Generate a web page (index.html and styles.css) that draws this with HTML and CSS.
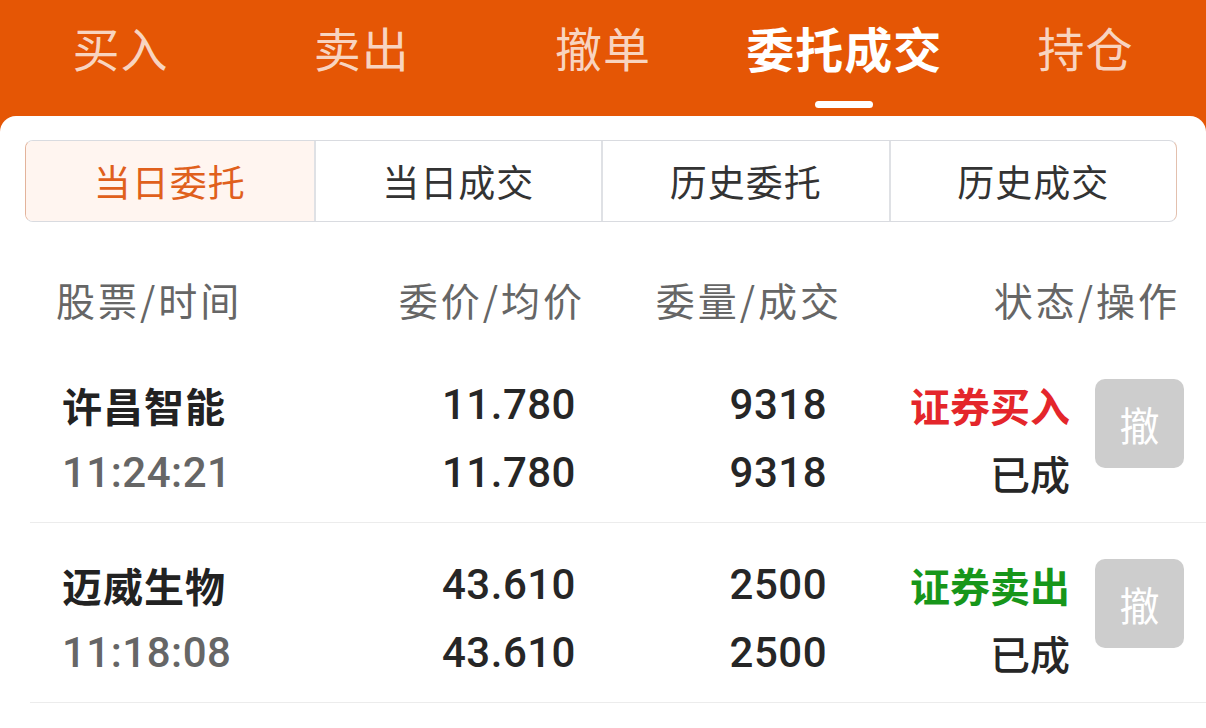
FILE: index.html
```html
<!DOCTYPE html>
<html lang="zh-CN">
<head>
<meta charset="utf-8">
<title>委托成交</title>
<link rel="stylesheet" href="styles.css">
</head>
<body>
<div class="app">
  <nav class="tabs">
    <div class="tab"><span class="tab-label">买入</span></div>
    <div class="tab"><span class="tab-label">卖出</span></div>
    <div class="tab"><span class="tab-label">撤单</span></div>
    <div class="tab active"><span class="tab-label">委托成交</span><span class="indicator"></span></div>
    <div class="tab"><span class="tab-label">持仓</span></div>
  </nav>
  <main class="panel">
    <div class="segment">
      <div class="seg active">当日委托</div>
      <div class="seg">当日成交</div>
      <div class="seg">历史委托</div>
      <div class="seg">历史成交</div>
    </div>
    <div class="list-head">
      <div class="h-cell">股票/时间</div>
      <div class="h-cell right">委价/均价</div>
      <div class="h-cell right">委量/成交</div>
      <div class="h-cell right">状态/操作</div>
    </div>
    <div class="row">
      <div class="cell"><div class="line name">许昌智能</div><div class="line time">11:24:21</div></div>
      <div class="cell num"><div class="line">11.780</div><div class="line">11.780</div></div>
      <div class="cell num"><div class="line">9318</div><div class="line">9318</div></div>
      <div class="cell status"><div class="line kind buy">证券买入</div><div class="line state">已成</div></div>
      <button class="cancel">撤</button>
    </div>
    <div class="row">
      <div class="cell"><div class="line name">迈威生物</div><div class="line time">11:18:08</div></div>
      <div class="cell num"><div class="line">43.610</div><div class="line">43.610</div></div>
      <div class="cell num"><div class="line">2500</div><div class="line">2500</div></div>
      <div class="cell status"><div class="line kind sell">证券卖出</div><div class="line state">已成</div></div>
      <button class="cancel">撤</button>
    </div>
  </main>
</div>
</body>
</html>
```
FILE: styles.css
```css
* { box-sizing: border-box; }
html, body { margin: 0; padding: 0; }
body {
  font-family: "Noto Sans CJK SC", "Noto Sans", sans-serif;
  background: #ffffff;
}
.app {
  min-height: 100vh;
  background: #e55605;
  display: flex;
  flex-direction: column;
}
.tabs {
  display: grid;
  grid-template-columns: repeat(5, 1fr);
  height: 116px;
}
.tab {
  display: flex;
  flex-direction: column;
  align-items: center;
  padding-top: 18px;
}
.tab-label {
  font-size: 47px;
  line-height: 58px;
  letter-spacing: 1px;
  color: rgba(255, 255, 255, 0.76);
}
.tab.active .tab-label {
  color: #ffffff;
  font-weight: 700;
  font-size: 48px;
}
.indicator {
  width: 58px;
  height: 7px;
  border-radius: 4px;
  background: #ffffff;
  margin-top: 25px;
}
.panel {
  flex: 1;
  background: #ffffff;
  border-radius: 16px 16px 0 0;
  padding-top: 24px;
}
.segment {
  margin: 0 29px 0 25px;
  height: 82px;
  display: grid;
  grid-template-columns: repeat(4, 1fr);
  border: 1px solid #d9dbe0;
  border-left-color: #e3b39b;
  border-right-color: #e3c0ae;
  border-radius: 8px;
  overflow: hidden;
}
.seg {
  display: flex;
  align-items: center;
  justify-content: center;
  font-size: 37px;
  letter-spacing: 1px;
  color: #333333;
  border-left: 2px solid #dfe1e5;
}
.seg:first-child { border-left: none; }
.seg.active {
  background: #fff5f0;
  color: #e0601c;
}
.list-head {
  display: grid;
  grid-template-columns: 274px 255px 257px 338px;
  padding: 57px 23px 24px 56px;
  font-size: 39px;
  line-height: 40px;
  letter-spacing: 3px;
  color: #666666;
}
.h-cell.right { text-align: right; }
.row {
  margin-left: 30px;
  display: grid;
  grid-template-columns: 268px 246px 251px 243px 114px;
  padding: 28px 22px 15px 32px;
  border-bottom: 1px solid #ececec;
}
.line {
  line-height: 68px;
  white-space: nowrap;
}
.name {
  font-size: 40px;
  letter-spacing: 1px;
  font-weight: 600;
  color: #222222;
}
.time {
  font-family: Roboto, "Liberation Sans", sans-serif;
  font-size: 42px;
  letter-spacing: 0.5px;
  font-weight: 500;
  color: #666666;
}
.num {
  text-align: right;
  font-family: Roboto, "Liberation Sans", sans-serif;
  font-size: 42px;
  letter-spacing: 0.5px;
  font-weight: 500;
  color: #262626;
}
.status {
  text-align: right;
  font-size: 40px;
  color: #262626;
}
.status .kind { font-weight: 600; }
.status .state { font-weight: 500; }
.status .buy { color: #e4262b; }
.status .sell { color: #17961a; }
.cancel {
  justify-self: end;
  align-self: start;
  margin-top: 8px;
  width: 89px;
  height: 89px;
  border: none;
  border-radius: 10px;
  background: #cdcdcd;
  color: #ffffff;
  font-family: "Noto Sans CJK SC", sans-serif;
  font-size: 40px;
  padding: 0;
}
```
